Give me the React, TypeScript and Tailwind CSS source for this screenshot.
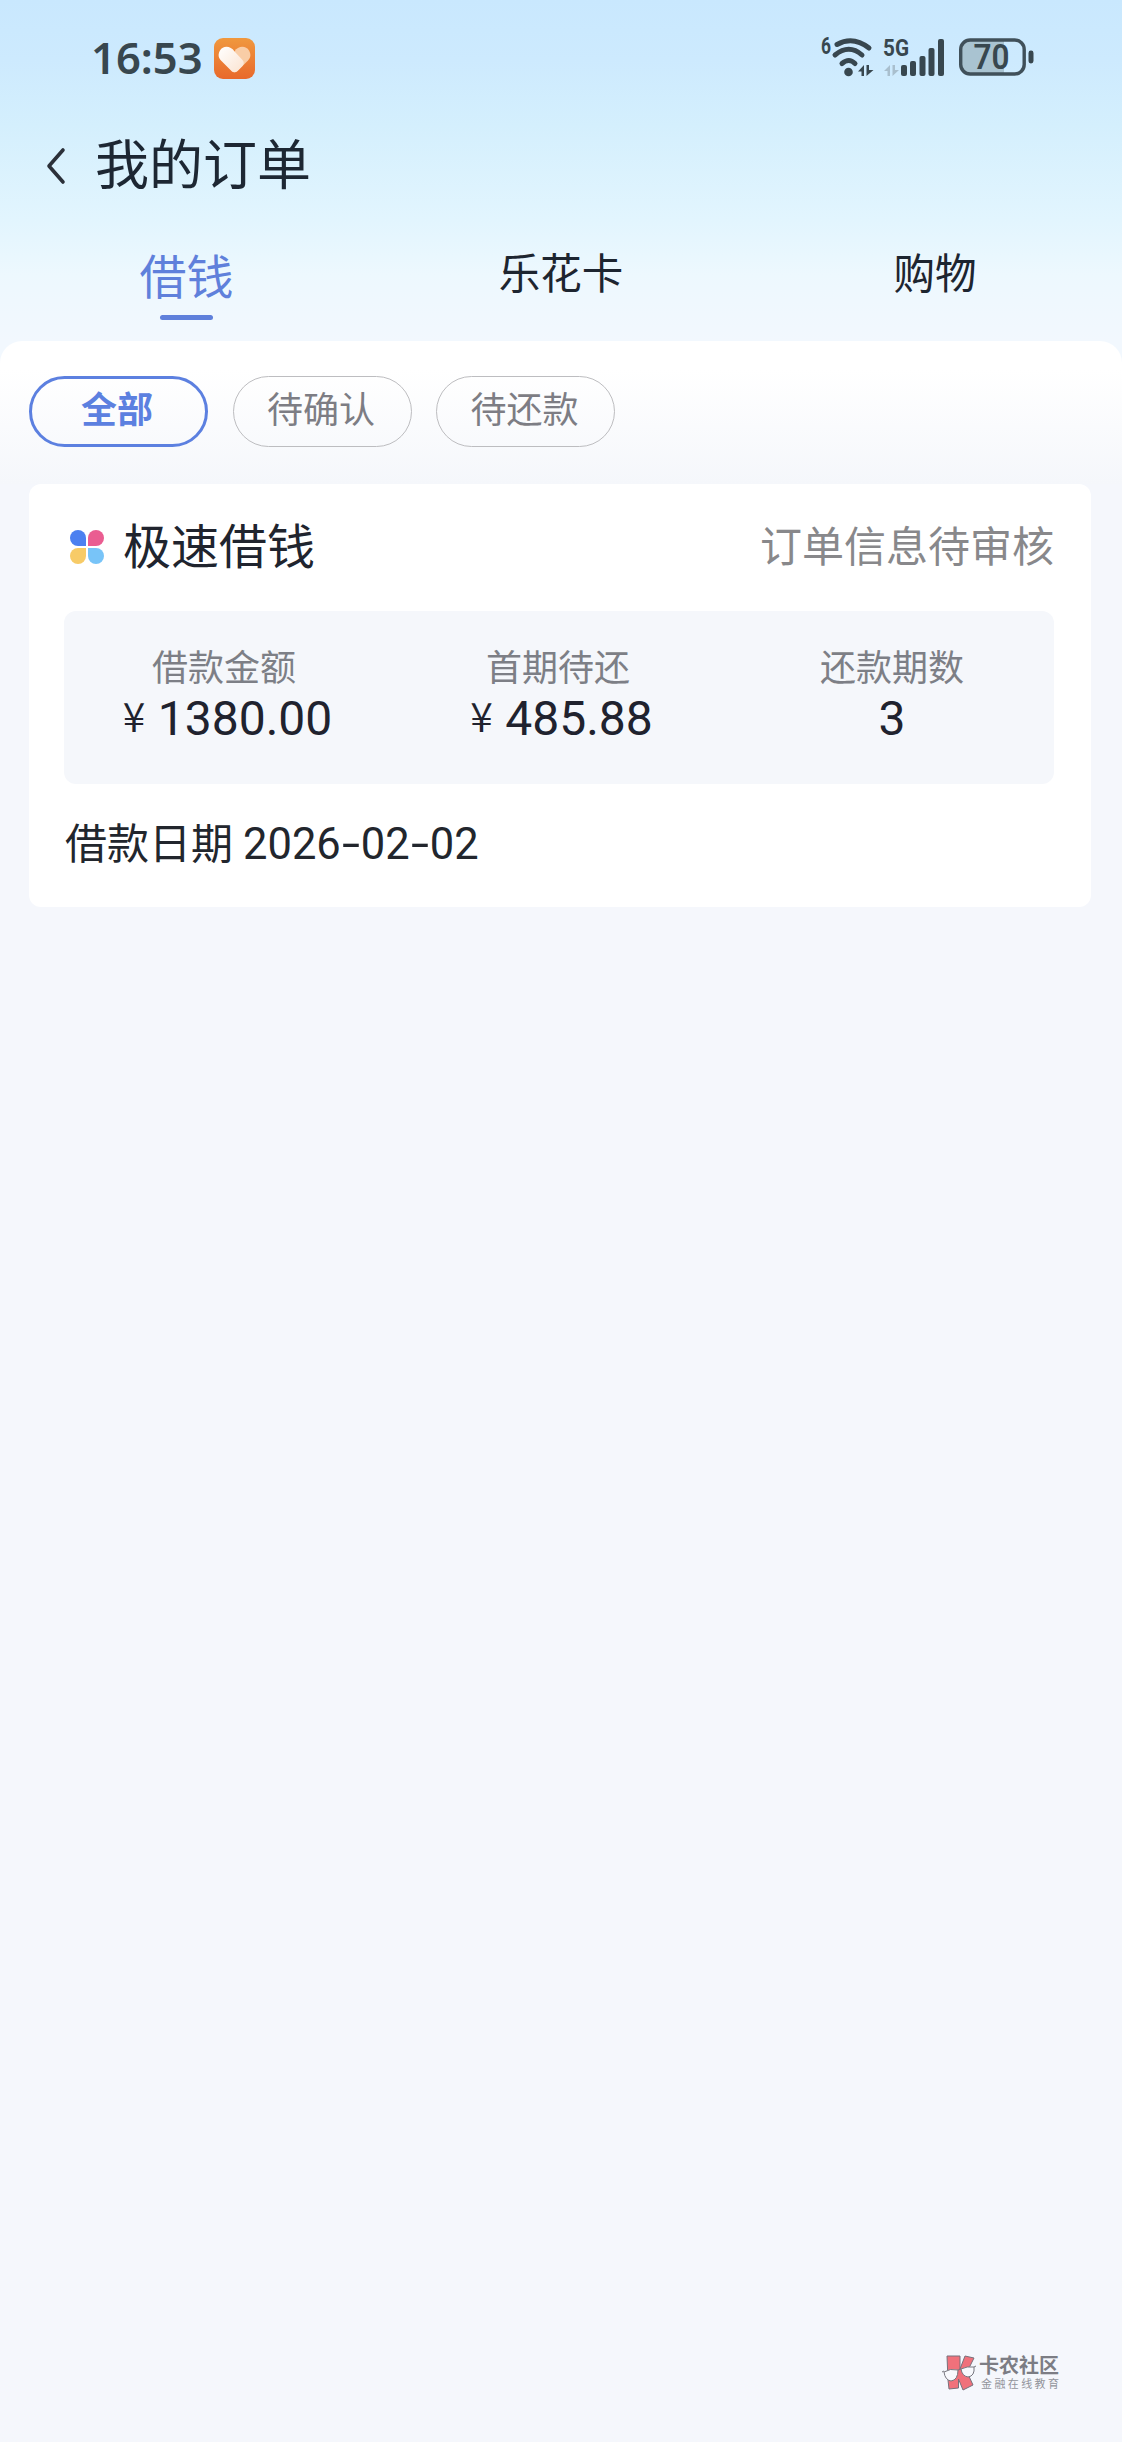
import React from "react";

const tabs = ["借钱", "乐花卡", "购物"];
const filters = ["全部", "待确认", "待还款"];
const details = [
  { label: "借款金额", value: "1380.00", currency: true },
  { label: "首期待还", value: "485.88", currency: true },
  { label: "还款期数", value: "3", currency: false },
];

const HeartBadge = () => (
  <svg width="41" height="41" viewBox="0 0 41 41">
    <defs>
      <linearGradient id="badge" x1="0" y1="0" x2="0" y2="1">
        <stop offset="0" stopColor="#f0983e" />
        <stop offset="1" stopColor="#e8692c" />
      </linearGradient>
      <linearGradient id="heart" x1="0" y1="0" x2="1" y2="1">
        <stop offset="0" stopColor="#fff" />
        <stop offset="1" stopColor="#fbe3d0" />
      </linearGradient>
    </defs>
    <rect width="41" height="41" rx="9" fill="url(#badge)" />
    <path
      d="M20.500 13.500C24 7.500 32 7.500 35 12.500C37.500 17 36.500 20 33 23.500L23.500 33Q20.500 35.500 17.500 33Z"
      fill="#f9cda6"
    />
    <path
      d="M20.500 13.500C16.500 7.500 9 7.500 6 12.500C3.500 17 4.500 20 8 23.500L17.500 33Q20.500 35.500 23.500 33L28.500 28Q31 25 28.500 22Z"
      fill="url(#heart)"
    />
  </svg>
);

const Wifi = () => (
  <svg className="overflow-visible" width="54" height="44" viewBox="0 0 54 44" fill="none">
    <text
      x="0"
      y="17.500"
      fontSize="23"
      fontWeight="700"
      fontFamily="Roboto, sans-serif"
      fill="#38474f"
      textLength="10"
      lengthAdjust="spacingAndGlyphs"
    >
      6
    </text>
    <g stroke="#38474f" strokeWidth="5" strokeLinecap="round">
      <path d="M16 8.500Q32 -0.500 48 12" />
      <path d="M14 19Q28 7.500 41 19" />
      <path d="M21 27.500Q28 21.500 34 27.500" />
    </g>
    <circle cx="27.500" cy="36" r="4.300" fill="#38474f" />
    <path d="M37 35.500L43 29V40H40.500V35.500ZM45.500 29H48V34H52.500L45.500 40Z" fill="#38474f" />
  </svg>
);

const Signal = () => (
  <svg className="overflow-visible" width="62" height="44" viewBox="0 0 62 44">
    <text
      x="0"
      y="20"
      fontSize="24"
      fontWeight="700"
      fontFamily="Roboto, sans-serif"
      fill="#38474f"
      textLength="26"
      lengthAdjust="spacingAndGlyphs"
    >
      5G
    </text>
    <path d="M1 35L7 29V40H4.500V35ZM9.500 29H12V34H16L9.500 40Z" fill="#a9bfce" />
    <g fill="#38474f">
      <rect x="18" y="29" width="6" height="11" rx="2" />
      <rect x="27" y="25" width="6" height="15" rx="2" />
      <rect x="36.500" y="20" width="6" height="20" rx="2" />
      <rect x="45.500" y="12" width="6" height="28" rx="2" />
      <rect x="55" y="3" width="6" height="37" rx="2" />
    </g>
  </svg>
);

const Battery = () => (
  <svg width="76" height="40" viewBox="0 0 76 40">
    <path d="M11 2H45V36H11Q2 36 2 27V11Q2 2 11 2Z" fill="#a9c3d1" />
    <rect x="1.700" y="2" width="63.500" height="34" rx="9.500" fill="none" stroke="#40505a" strokeWidth="3.400" />
    <rect x="69.500" y="12.500" width="5" height="13" rx="2.400" fill="#38474f" />
    <text
      x="32.500"
      y="31"
      textAnchor="middle"
      fontSize="34.500"
      fontWeight="600"
      fontFamily="Roboto, sans-serif"
      fill="#38474f"
      textLength="36"
      lengthAdjust="spacingAndGlyphs"
    >
      70
    </text>
  </svg>
);

const Petals = () => (
  <svg width="34" height="34" viewBox="0 0 34 34">
    <path d="M16 16H8A8 8 0 1 1 16 8Z" fill="#4c80f0" />
    <path d="M18 16H26A8 8 0 1 0 18 8Z" fill="#ea5d91" />
    <path d="M16 18H8A8 8 0 1 0 16 26Z" fill="#f7cb67" />
    <path d="M18 18H26A8 8 0 1 1 18 26Z" fill="#78c4f8" />
  </svg>
);

const StatusBar = () => (
  <div className="flex h-[116px] items-start justify-between pl-[91px] pr-[87px] pt-[36px]">
    <div className="flex items-start gap-[11px] pt-[2px]">
      <span className="-mt-px w-[112px] font-['Noto_Sans'] text-[43.5px] font-semibold leading-[41px] text-[#38474f]">
        16:53
      </span>
      <HeartBadge />
    </div>
    <div className="flex items-start">
      <Wifi />
      <div className="ml-[8px]">
        <Signal />
      </div>
      <div className="ml-[14px] mt-[2px]">
        <Battery />
      </div>
    </div>
  </div>
);

const TitleBar = () => (
  <div className="flex h-[96px] items-start pl-[46px]">
    <svg className="mt-[31px]" width="20" height="38" viewBox="0 0 20 38" fill="none">
      <path
        d="M17 3L3 19L17 35"
        stroke="#2b3039"
        strokeWidth="3.600"
        strokeLinecap="round"
        strokeLinejoin="round"
      />
    </svg>
    <h1 className="ml-[29px] mt-[16px] text-[54px] leading-[60px] text-[#1d2733]">我的订单</h1>
  </div>
);

const Tabs = () => (
  <div className="grid h-[129px] grid-cols-3">
    {tabs.map((tab, i) =>
      i === 0 ? (
        <div key={tab} className="flex flex-col items-center pr-px pt-[32px] text-[#5f80db]">
          <span className="text-[47px] leading-[60px]">{tab}</span>
          <span className="mt-[11px] h-[5px] w-[53px] rounded-full bg-[#5f80db]" />
        </div>
      ) : (
        <div key={tab} className="pt-[29px] text-center text-[41.5px] leading-[60px] text-[#1d2530]">
          {tab}
        </div>
      )
    )}
  </div>
);

const Filters = () => (
  <div className="flex h-[143px] gap-[24.5px] rounded-t-[22px] bg-gradient-to-b from-white from-20% to-[#f5f7fb] px-[29px] pt-[35px]">
    {filters.map((filter, i) => (
      <div
        key={filter}
        className={
          i === 0
            ? "h-[71px] w-[179px] rounded-full border-[3px] border-[#5c80e0] pr-[3px] text-center text-[36px] font-bold leading-[57px] text-[#5c80e0]"
            : "h-[71px] w-[179px] rounded-full border border-[#bdbdc0] pr-[2px] text-center text-[36px] leading-[61px] text-[#7d7d84]"
        }
      >
        {filter}
      </div>
    ))}
  </div>
);

const OrderCard = () => (
  <div className="ml-[29px] mr-[31px] h-[423px] rounded-[12px] bg-white pl-[35px] pr-[37px]">
    <div className="flex h-[127px] items-start">
      <div className="ml-[6px] mt-[46px]">
        <Petals />
      </div>
      <h2 className="ml-[19px] mt-[29px] text-[48px] leading-[60px] text-[#20242e]">极速借钱</h2>
      <span className="ml-auto mt-[30px] text-[42px] leading-[60px] text-[#88888b]">订单信息待审核</span>
    </div>
    <div className="h-[173px] rounded-[12px] bg-[#f5f7fb] pt-[32px]">
      <div className="-ml-[7px] -mr-[5px] grid grid-cols-3">
        {details.map((item) => (
          <div key={item.label} className="flex flex-col items-center">
            <span className="text-[36px] leading-[44px] text-[#7d7f86]">{item.label}</span>
            {item.currency ? (
              <span className="mt-[3px] flex items-baseline pl-[7px] font-['Roboto'] text-[48px] leading-[58px] text-[#20222e]">
                <span className="w-[35px] -translate-y-[3px] font-['Noto_Sans_CJK_SC'] text-[41px] font-[350] leading-[40px]">
                  ¥
                </span>
                {item.value}
              </span>
            ) : (
              <span className="mt-[3px] font-['Roboto'] text-[48px] leading-[58px] text-[#20222e]">
                {item.value}
              </span>
            )}
          </div>
        ))}
      </div>
    </div>
    <div className="flex items-baseline pl-px pt-[27px] leading-[60px] text-[#22262d]">
      <span className="text-[42px]">借款日期</span>
      <span className="ml-[10px] flex font-['Roboto'] text-[43.5px]">
        2026
        <span className="w-5 scale-x-150 text-center">-</span>
        02
        <span className="w-5 scale-x-150 text-center">-</span>
        02
      </span>
    </div>
  </div>
);

const Watermark = () => (
  <div className="flex items-start pb-[50px] pl-[941px]">
    <svg width="36" height="38" viewBox="0 0 36 38">
      <path
        d="M6 2H19V15L24 2L33 4L26 18L32 31L22 36L17.500 25V34L8 35L7 26Z"
        fill="#f0717b"
        stroke="#77717c"
        strokeWidth="1"
      />
      <g fill="#f8f9fd" stroke="#77777f" strokeWidth="1">
        <path d="M3 18Q9 14 17 16Q17 26 10 27Q4 26 3 18Z" />
        <path d="M20 15Q26 12 33 13Q34 22 27 23Q21 22 20 15Z" />
        <path d="M1 18L3 17M17 16L20 15M33 13L35 12" />
      </g>
    </svg>
    <div className="ml-[2px] whitespace-nowrap">
      <div className="text-[20px] font-bold leading-[21px] text-[#7c7d84]">卡农社区</div>
      <div className="ml-[2px] mt-[2px] text-[11px] leading-[13px] tracking-[2.400px] text-[#92949b]">
        金融在线教育
      </div>
    </div>
  </div>
);

const App = () => {
  return (
    <div className="flex h-[2442px] w-[1122px] flex-col overflow-hidden bg-[#f5f7fc] font-['Noto_Sans_CJK_SC',sans-serif]">
      <div className="bg-[linear-gradient(180deg,#c9e8fe_0px,#cdeafe_60px,#d4effd_125px,#e2f5fe_220px,#edf8fe_275px,#f2f8fe_341px,#f2f8fe_365px,#f5f7fb_366px)]">
        <StatusBar />
        <TitleBar />
        <Tabs />
        <Filters />
      </div>
      <OrderCard />
      <div className="flex-1" />
      <Watermark />
    </div>
  );
};

export default App;
